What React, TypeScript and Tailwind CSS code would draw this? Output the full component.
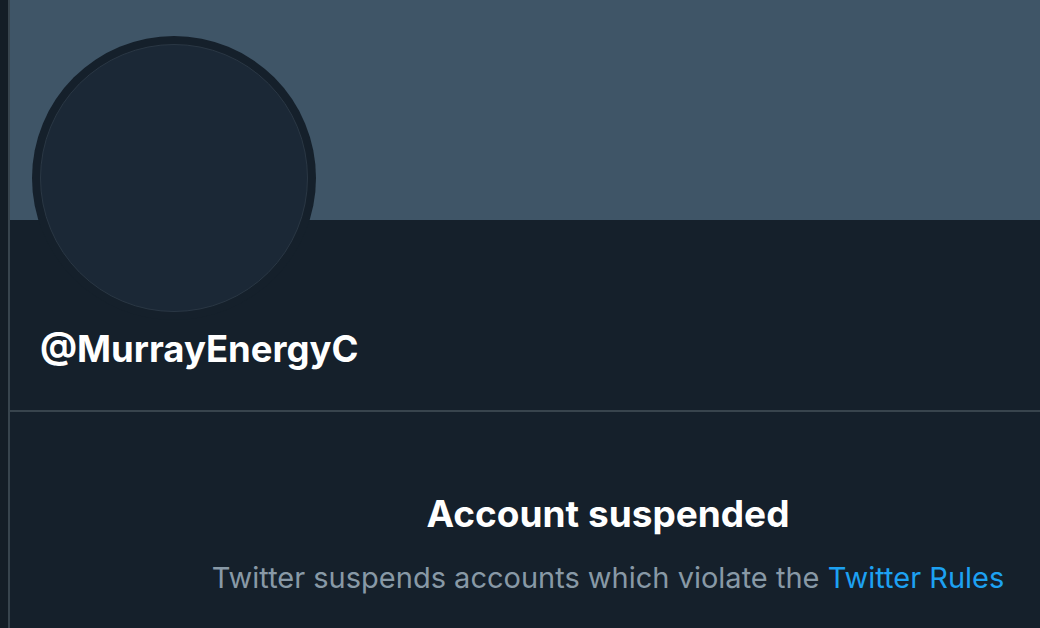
export default function App() {
  return (
    <div className="w-[1040px] h-[628px] overflow-hidden bg-[#15202b] flex font-['Inter','Liberation_Sans',sans-serif]">
      <div className="w-2 shrink-0 bg-[#141d26]" />
      <div className="w-[2px] shrink-0 bg-[#38444d]" />
      <div className="w-[1196px] shrink-0 flex flex-col">
        <div className="h-[220px] bg-[#3f5567]" />
        <div className="h-[190px] flex flex-col">
          <div className="-mt-[184px] ml-[22px] w-[284px] h-[284px] rounded-full bg-[#15202b] p-2">
            <div className="w-full h-full rounded-full bg-[#1b2836] border border-[#2a3744]" />
          </div>
          <div className="mt-[9px] ml-[30px] text-[36.5px] leading-[40px] font-bold text-white">
            @MurrayEnergyC
          </div>
        </div>
        <div className="h-[2px] bg-[#38444d]" />
        <div className="mt-[82px] flex flex-col items-center">
          <div className="text-[37px] leading-[40px] font-bold text-white">Account suspended</div>
          <div className="mt-[26px] text-[29px] leading-[36px] text-[#8899a6]">
            Twitter suspends accounts which violate the <span className="text-[#1da1f2]">Twitter Rules</span>
          </div>
        </div>
      </div>
    </div>
  );
}
